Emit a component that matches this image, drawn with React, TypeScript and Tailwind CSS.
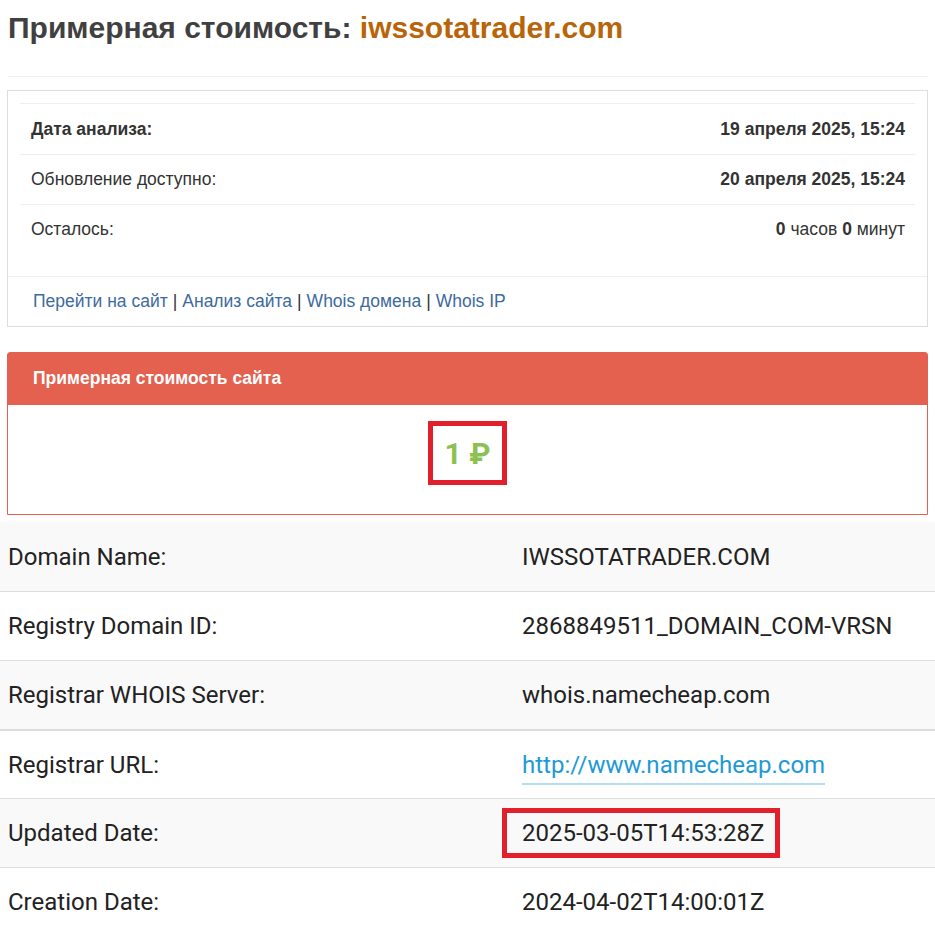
import React from "react";

const info = [
  { label: "Дата анализа:", bold: true, value: <b>19 апреля 2025, 15:24</b> },
  { label: "Обновление доступно:", bold: false, value: <b>20 апреля 2025, 15:24</b> },
  {
    label: "Осталось:",
    bold: false,
    value: (
      <>
        <b>0</b> часов <b>0</b> минут
      </>
    ),
  },
];

const whois: { k: string; v: string; link?: boolean; mark?: boolean }[] = [
  { k: "Domain Name:", v: "IWSSOTATRADER.COM" },
  { k: "Registry Domain ID:", v: "2868849511_DOMAIN_COM-VRSN" },
  { k: "Registrar WHOIS Server:", v: "whois.namecheap.com" },
  { k: "Registrar URL:", v: "http://www.namecheap.com", link: true },
  { k: "Updated Date:", v: "2025-03-05T14:53:28Z", mark: true },
  { k: "Creation Date:", v: "2024-04-02T14:00:01Z" },
];

export default function App() {
  return (
    <div className="w-[935px] bg-white text-[#333]" style={{ fontFamily: '"Liberation Sans", Arial, sans-serif' }}>
      <div className="px-[7px]">
        <h1 className="pl-px pt-[10px] pb-[30px] text-[30px] font-bold leading-[36px] text-[#404040]">
          Примерная стоимость: <span className="text-[#b8650a]">iwssotatrader.com</span>
        </h1>
        <div className="border-t border-[#eee] ml-px" />

        <div className="mt-[13px] border border-[#ddd]">
          <div className="px-3 pt-3">
            <div className="border-t border-[#eee]">
              {info.map((r, i) => (
                <div
                  key={i}
                  className={`flex h-[50px] items-center justify-between pl-[11px] pr-[10px] text-[17.5px] ${i > 0 ? "border-t border-[#eee]" : ""}`}
                >
                  <span className={r.bold ? "font-bold" : ""}>{r.label}</span>
                  <span>{r.value}</span>
                </div>
              ))}
            </div>
          </div>
          <div className="mt-[22px] flex h-[50px] items-center border-t border-[#eee] px-[25px] text-[17.5px] text-[#3d6aa0]">
            <a>Перейти на сайт</a>
            <span className="mx-[5px] text-[#333]">|</span>
            <a>Анализ сайта</a>
            <span className="mx-[5px] text-[#333]">|</span>
            <a>Whois домена</a>
            <span className="mx-[5px] text-[#333]">|</span>
            <a>Whois IP</a>
          </div>
        </div>

        <div className="mt-[25px] rounded-t-[3px] border border-[#e4604f]">
          <div className="flex h-[51px] items-center bg-[#e4604f] px-[25px] text-[17.5px] font-bold text-white">
            Примерная стоимость сайта
          </div>
          <div className="flex h-[110px] items-start justify-center border-t border-[#e4604f] pt-4">
            <div
              className="flex h-[64px] w-[79px] items-center justify-center border-[5px] border-[#e2202b] text-[30px] font-bold text-[#8cc152]"
              style={{ fontFamily: 'Roboto, "Liberation Sans", sans-serif' }}
            >
              1 ₽
            </div>
          </div>
        </div>
      </div>

      <div className="mt-[7px] text-[24px] text-[#222]" style={{ fontFamily: 'Roboto, "Liberation Sans", sans-serif' }}>
        {whois.map((r, i) => (
          <div
            key={i}
            className={`flex h-[69px] items-center ${i % 2 === 0 ? "bg-[#f9f9f9]" : "bg-white"} ${i > 0 ? (i === 3 ? "border-t-2 border-[#ddd]" : "border-t border-[#ddd]") : ""}`}
          >
            <div className="w-[514px] pl-2">{r.k}</div>
            <div className="flex-1">
              {r.link ? (
                <a className="ml-2 border-b-2 border-[#b6dcef] pb-[4px] text-[#1d9ad6]">{r.v}</a>
              ) : r.mark ? (
                <span className="-ml-[12px] inline-block border-[5px] border-[#e2202b] py-[6px] pl-[15px] pr-[11px] leading-[28px]">{r.v}</span>
              ) : (
                <span className="ml-2">{r.v}</span>
              )}
            </div>
          </div>
        ))}
      </div>
    </div>
  );
}
